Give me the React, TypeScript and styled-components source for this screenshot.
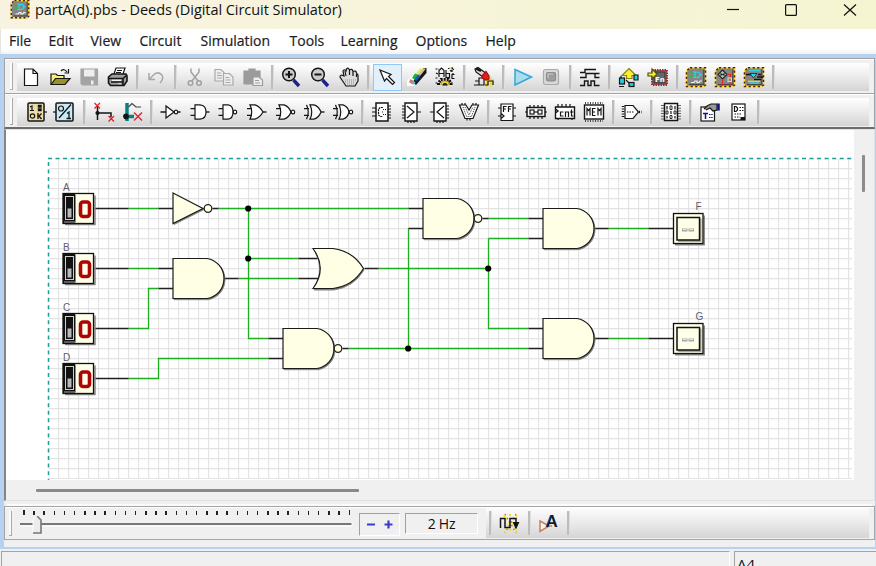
import React from "react";
import styled, { createGlobalStyle } from "styled-components";

const Global = createGlobalStyle`
  * { box-sizing: border-box; }
  body { margin: 0; overflow: hidden; background: #efefef; }
`;

const Window = styled.div`
  width: 876px;
  height: 566px;
  overflow: hidden;
  display: flex;
  flex-direction: column;
  background: #f0f0f0;
  font-family: "Open Sans", "Noto Sans", sans-serif;
  color: #111;
`;

const TitleBar = styled.header`
  height: 29px;
  flex: none;
  display: flex;
  align-items: flex-start;
  background: linear-gradient(100deg, #f8f3e1, #f6f4d8 60%, #f5f5d2);
`;

const AppIcon = styled.svg`
  width: 22px;
  height: 22px;
  margin: -2px 0 0 9px;
`;

const Title = styled.h1`
  margin: 0 0 0 4px;
  width: 680px;
  font-size: 14.5px;
  font-weight: 400;
  line-height: 20px;
  letter-spacing: -0.05px;
  white-space: nowrap;
`;

const WindowButton = styled.svg<{ $gap: number }>`
  width: 14px;
  height: 14px;
  margin: 3px 0 0 ${(p) => p.$gap}px;
  fill: none;
  stroke: #111;
  stroke-width: 1.2;
`;

const MenuBar = styled.nav`
  height: 25px;
  flex: none;
  display: flex;
  padding-left: 8px;
  border-left: 1px solid #e4e4e4;
  background: linear-gradient(#fff 80%, #f2f2f2);
`;

const MenuItem = styled.span<{ $w: number }>`
  width: ${(p) => p.$w}px;
  flex: none;
  font-size: 14px;
  line-height: 24px;
  white-space: nowrap;
  color: #1b1b25;
  -webkit-text-stroke: 0.2px #1b1b25;
`;

const Frame = styled.main`
  height: 495px;
  flex: none;
  display: flex;
  flex-direction: column;
  border: solid #b7d2f0;
  border-width: 4px 1px 2px 4px;
  background: #f0f0f0;
`;

const ToolRow = styled.div<{ $last?: boolean }>`
  height: ${(p) => (p.$last ? 36 : 35)}px;
  flex: none;
  display: flex;
  align-items: flex-start;
  padding: 4px 5px 0 5px;
  border: solid #a2a2a2;
  border-width: 1px 1px ${(p) => (p.$last ? "2px" : "0")} 1px;
  border-bottom-color: #6c6c6c;
  box-shadow: inset 0 1px #fff;
`;

const Grip = styled.i`
  width: 3px;
  height: 27px;
  flex: none;
  border: solid #aaa;
  border-width: 0 1px 1px 0;
  background: #fbfbfb;
`;

const Tools = styled.div<{ $pad: number }>`
  flex: 1;
  height: 28px;
  display: flex;
  align-items: center;
  margin-left: 4px;
  padding-left: ${(p) => p.$pad}px;
  background: linear-gradient(#fff, #ebebeb 50%, #d4d4d4);
`;

const Slot = styled.div<{ $active?: boolean }>`
  width: 28.8px;
  height: 27px;
  flex: none;
  display: flex;
  align-items: center;
  justify-content: center;
  border: 1px solid ${(p) => (p.$active ? "#8fc8f7" : "transparent")};
  background: ${(p) => (p.$active ? "#e2f0fc" : "transparent")};
`;

const Glyph = styled.svg`
  width: 24px;
  height: 24px;
  flex: none;
  overflow: visible;
  fill: none;
  stroke: #151515;
  stroke-width: 1.2;
  font-family: "DejaVu Sans", sans-serif;
  font-weight: 700;
`;

const Divider = styled.div`
  width: 9.9px;
  height: 24px;
  flex: none;
  display: flex;
  justify-content: center;
  &::after {
    content: "";
    width: 2px;
    background: #bcbcbc;
    border-right: 1px solid #dedede;
  }
`;

const Work = styled.section`
  height: 372px;
  flex: none;
  display: flex;
  border: solid #e2e2e2;
  border-width: 1px 1px 1px 2px;
  border-left-color: #858585;
`;

const WorkMain = styled.div`
  width: 848px;
  flex: none;
  display: flex;
  flex-direction: column;
`;

const Sheet = styled.svg`
  width: 848px;
  height: 350px;
  flex: none;
  display: block;
  background: #fff;
`;

const HScroll = styled.div`
  flex: 1;
  padding: 8.5px 0 0 30px;
  &::after {
    content: "";
    display: block;
    width: 323px;
    height: 3px;
    border-radius: 1px;
    background: #8a8a8a;
  }
`;

const VScroll = styled.div`
  flex: 1;
  padding: 25px 0 0 8px;
  &::after {
    content: "";
    display: block;
    width: 3px;
    height: 37px;
    border-radius: 1px;
    background: #8b8b8b;
  }
`;

const SimBar = styled.div`
  height: 34px;
  flex: none;
  display: flex;
  margin-top: 5px;
  padding: 1px 5px 1px 4px;
  border: 1px solid #a5a5a5;
  box-shadow: 0 -5px 0 -3px #fbfbfb, inset 0 1px #fff;
`;

const SimGrip = styled(Grip)`
  height: 25px;
  margin-top: 3px;
`;

const Slider = styled.div`
  width: 335px;
  flex: none;
  margin-left: 8px;
  display: flex;
  flex-direction: column;
`;

const Ticks = styled.div`
  display: flex;
  justify-content: space-between;
  width: 327px;
  height: 6px;
  margin: 2px 0 0 3px;
`;

const Tick = styled.i<{ $end: boolean }>`
  width: 1.5px;
  height: ${(p) => (p.$end ? 5 : 4)}px;
  margin-top: ${(p) => (p.$end ? 0 : 1)}px;
  background: #222;
`;

const Track = styled.svg`
  width: 335px;
  height: 20px;
`;

const Well = styled.div<{ $w: number; $ml: number; $h: number; $mt: number }>`
  width: ${(p) => p.$w}px;
  height: ${(p) => p.$h}px;
  flex: none;
  margin: ${(p) => p.$mt}px 0 0 ${(p) => p.$ml}px;
  display: flex;
  align-items: center;
  justify-content: center;
  border: 1px solid;
  border-color: #a0a0a0 #fff #fff #a0a0a0;
  font-size: 14px;
  letter-spacing: -0.3px;
`;

const SimTools = styled.div`
  flex: 1;
  margin-left: 8px;
  display: flex;
  align-items: center;
  background: linear-gradient(#fdfdfd, #ececec 45%, #d5d5d5);
`;

const Status = styled.footer`
  height: 17px;
  flex: none;
  display: flex;
  padding: 2px 0 0 1px;
  overflow: hidden;
  gap: 4px;
`;

const StatusPane = styled.div<{ $w?: number }>`
  ${(p) => (p.$w ? `width: ${p.$w}px; flex: none;` : "flex: 1;")}
  height: 24px;
  padding: 2px 0 0 2px;
  border: solid #a3a3a3;
  border-width: 1px 0 0 1px;
  border-right: ${(p) => (p.$w ? "1px solid #fff" : "0")};
  font-size: 15px;
  line-height: 20px;
  overflow: hidden;
`;

const Chip = ({ kind }: { kind: number }) => (
  <g stroke="none">
    <path d="M6 2H22V20L20 22H2V6Z" fill="#858585" />
    <path d="M6 2.7H21.5V20L19.5 21.5H2.5V6Z" fill="none" stroke="#f7ea2c" strokeWidth="1.5" />
    <path d="M6 2.7H21.5V20L19.5 21.5H2.5V6Z" fill="none" stroke="#5f1818" strokeWidth="1.5" strokeDasharray="2.200 2.400" />
    <path d="M5 19.6H19.8V4.500" fill="none" stroke="#333" strokeWidth="0.9" />
    {kind === 0 && (
      <g fill="none">
        <path d="M9 7H12.500Q16 7 16 9.700Q16 12.500 12.500 12.500H9M11 7V12.500M16 9.700H18" stroke="#18dfee" strokeWidth="1.2" />
        <path d="M6 8h2.500M6 11.500h2.500" stroke="#22c522" strokeWidth="1.2" />
        <path d="M7 17.500h3l1-1.500h2v1.500h2l1-1.500h2" stroke="#f4f4f4" strokeWidth="1.2" />
      </g>
    )}
    {kind === 1 && (
      <g fill="none">
        <path d="M9.500 5L14 9.500L9.500 14L5 9.500Z" fill="#b8c4b4" stroke="#222" strokeWidth="1.1" />
        <path d="M8 11V8M11 11V8M8 9.500h3" stroke="#111" strokeWidth="0.9" />
        <path d="M14 9.500h3.500v3M9.500 14v7" stroke="#e32626" strokeWidth="1.2" />
        <rect x="15" y="13" width="3.500" height="3.500" stroke="#f4d0d0" strokeWidth="1" />
        <path d="M17 17v4" stroke="#e32626" strokeWidth="1.2" />
      </g>
    )}
    {kind === 2 && (
      <g fill="none">
        <path d="M7 5.500H18M7 18.200H17" stroke="#18dfee" strokeWidth="1.5" />
        <path d="M4 9.500H9M15 12H21M16 9.500h3M12 14.500h7" stroke="#111" strokeWidth="1.4" />
        <path d="M8 8.500h7l-3.500 4.500z" fill="#18dfee" stroke="#222" strokeWidth="0.800" />
        <path d="M6 16.300h12" stroke="#f3df22" strokeWidth="1.200" />
      </g>
    )}
  </g>
);

const Gate = ({ kind, not }: { kind: "and" | "or" | "xor" | "inv"; not?: boolean }) => {
  const end = kind === "inv" ? 15 : not ? 17 : 18;
  return (
    <g transform="translate(0 -1.2) scale(1 1.1)">
      {kind === "inv" && <path d="M1.500 12H7M7 6.500V17.500L15 12ZM19 12H21.500" fill="#fff" />}
      {kind === "and" && <path d={`M2.500 9H7M2.500 15H7M7 5.500H12Q${end} 6 ${end} 12Q${end} 18 12 18.500H7Z`} fill="#fff" />}
      {kind === "or" && <path d={`M2 9H7M2 15H7M5 5.500H10Q15 7 ${end} 12Q15 17 10 18.500H5Q8.500 12 5 5.500Z`} fill="#fff" />}
      {kind === "xor" && (
        <g>
          <path d={`M1 9H6M1 15H6M7 5.500H11Q16 7 ${end} 12Q16 17 11 18.500H7Q10.500 12 7 5.500Z`} fill="#fff" />
          <path d="M3.500 5.500Q7 12 3.500 18.500" />
        </g>
      )}
      {not || kind === "inv" ? <circle cx={end + 2} cy="12" r="1.700" fill="#fff" /> : <path d="M18 12H21.500" />}
    </g>
  );
};

const Lens = ({ plus }: { plus?: boolean }) => (
  <g>
    <path d="M14.500 15L20 21" stroke="#20208a" strokeWidth="3.400" />
    <circle cx="10" cy="9.500" r="6.300" fill="#c9cdd0" strokeWidth="1.500" />
    <path d={plus ? "M6.500 9.500h7M10 6v7" : "M6.500 9.500h7"} strokeWidth="2" />
  </g>
);

const icons: Record<string, React.ReactNode> = {
  new: <path d="M5.500 4H14L18.500 8.500V20.500H5.500ZM14 4V8.500H18.500" fill="#fff" />,
  open: (
    <g>
      <path d="M3 19V9H8L9.500 10.500H16V14" fill="#f5ee78" />
      <path d="M3 19.500L7.500 13.500H22L17 19.500Z" fill="#98922c" />
      <path d="M13 6Q16 3 19 7M20.500 4V8H16.500" />
    </g>
  ),
  save: (
    <g stroke="#a4a4a4">
      <path d="M4 4H20.500V20H5.500L4 18.500Z" fill="#a4a4a4" />
      <path d="M7 4.500H17.500V11.500H7ZM14 15.500h2.500v4H14z" fill="#eee" stroke="none" />
    </g>
  ),
  print: (
    <g>
      <path d="M8 9L10 3H19L17 9M11 5.500h5M10 7.500h5" fill="#fff" />
      <path d="M2.500 12L6 9H20L21 11V16L18 20.500H4.500L2.500 18Z" fill="#a0a0a0" strokeWidth="1.600" />
      <path d="M3 13.500H17L20.500 10.500M5 17H17M17 14V20" strokeWidth="1.600" />
      <path d="M6 15.300H15" stroke="#fff" /><path d="M12 18.500h3" stroke="#eadf52" />
    </g>
  ),
  undo: <path d="M5 8V14.500H11M5.500 14L10 9.500Q14 6 18 10Q20 14 16 18" stroke="#a9a9a9" strokeWidth="1.500" />,
  cut: (
    <g stroke="#a1a1a1" strokeWidth="1.500">
      <path d="M8 3.500V7L15 16M16 3.500V7L9 16" />
      <circle cx="7.500" cy="18" r="2.300" /><circle cx="16" cy="18" r="2.300" />
    </g>
  ),
  copy: (
    <g stroke="#a8a8a8" fill="#eee">
      <path d="M3 4.500H9L12 7.500V16H3ZM5 8h4M5 10.500h5M5 13h5" />
      <path d="M11.500 8.500H17.500L21 12V20H11.500ZM13.500 12.500h4M13.500 15h5M13.500 17.500h5" />
    </g>
  ),
  paste: (
    <g stroke="#9b9b9b">
      <path d="M3 6H8V4H14V6H19V19H3Z" fill="#9b9b9b" />
      <path d="M12 12H18L21.500 15V20.500H12ZM14 15.500h4M14 18h5" fill="#eee" />
    </g>
  ),
  zoomIn: <Lens plus />,
  zoomOut: <Lens />,
  hand: (
    <g>
      <path d="M7 18L3 12Q3 9 7 11L6 6Q7 3.500 9 6L9.500 4Q11.500 2 12.500 5Q15 3 16 6.500Q19 5 19.500 8L21 10V16L18 21H9Z" fill="#ddd" />
      <path d="M8 6L9 11M12.500 5V10M16 7V11M19.500 9V12" />
      <path d="M8 15H19M8 17H18M10 19H18" stroke="#8d8d8d" strokeDasharray="1 1" />
    </g>
  ),
  arrow: <path d="M4 5L15 9.500L12.500 11.500L18.500 17.500L16.500 19.500L10.500 13.500L8.500 16Z" fill="#fff" />,
  eraser: (
    <g stroke="none">
      <path d="M2 16L7 11L13 16L9 21H2Z" fill="#fff" />
      <path d="M18.500 3H21.500V8L11 20L7.500 17Z" fill="#191919" />
      <path d="M15 3.500H20.500L14 12L10 9.500Z" fill="#efe66b" />
      <path d="M17.500 4H20.500L14 12L12.500 10Z" fill="#c9c4a0" />
      <path d="M10 8.500L14.500 10.500L11 15.500L7 13Z" fill="#10b634" />
      <path d="M13 9.500l2.500 1.500-4 5-2-1.500z" fill="#2353c4" />
      <path d="M5.500 14L9.500 16.500L7.500 19.500L4 17Z" fill="#c77" />
      <path d="M8.500 16L10.500 17.500L9 20L7 18.500Z" fill="#4ac6dc" />
    </g>
  ),
  props: (
    <g>
      <path d="M2.500 4L6 4M3 8L5 9M2.500 13h3M15 3.500h6M17 6l4-2M19 2v5M20 8v3M2.500 18h3" strokeDasharray="2 1" />
      <path d="M6 12V5.500L8.500 3L11 5.500V12M6 8.500H11M13 5V12.500H16.500V8.500H13M21.500 9.500H19V13.500H21.500" />
      <path d="M5.500 20V18L8 14.500H15.500L18 18V20" stroke="#111" strokeWidth="3" strokeDasharray="2 1" />
      <path d="M8 20Q8 16 12 16Q16 16 16 20" fill="#f2e13a" stroke="#b79a17" />
      <path d="M10 20.500a2 2 0 0 1 4 0" fill="#222" /><path d="M16 3h3" stroke="#f2e13a" />
    </g>
  ),
  probe: (
    <g>
      <path d="M2 20H7M3 16H7V13H12V20H7V16" />
      <path d="M15 12V22M19 12V22M13 15H22M13 19H22" stroke="#ecdf24" strokeWidth="1.500" />
      <path d="M13 20H16V16H21V20" />
      <path d="M3 4L6 2.500L15 9L11 12L4 7Z" fill="#e4d8d4" />
      <path d="M10 11L14 6.500L17 11V14L14 15L10 13Z" fill="#e31c1c" stroke="#a11" />
      <path d="M4 3.500L9 6" strokeWidth="2.500" />
    </g>
  ),
  play: <path d="M4 4.500L20.500 12L4 20Z" fill="#a9dcef" stroke="#36a6d2" strokeWidth="1.500" />,
  stop: (
    <g>
      <rect x="4.500" y="4.500" width="15" height="15" rx="2" fill="#d9d9d9" stroke="#aaa" />
      <rect x="7.500" y="7.500" width="9" height="8.500" rx="1.500" fill="#9d9d9d" stroke="#8c8c8c" />
      <path d="M9 13V9h5" stroke="#c9c9c9" />
    </g>
  ),
  wave: <path d="M2 7.500H7V4.500H18M2 12.500H8V8.500H17V12.500H21.500M2 20.500H6.500V16H10V20.500H13V16H16.500V20.500H21.500M17 8.500H21.500" strokeWidth="1.400" />,
  hierarchy: (
    <g>
      <path d="M12 3.500L19 10.500H15V13.500H9.500V10.500H5Z" fill="#f7f32a" stroke="#8d8020" />
      <g fill="#25cede"><rect x="2.500" y="13" width="5" height="6" /><rect x="12" y="17.500" width="5" height="4" /><path d="M17 10h4v5h-4z" /></g>
      <path d="M2 21.500h5M4 11v2M9 15l3 3" />
    </g>
  ),
  fn: (
    <g>
      <rect x="6" y="5" width="15" height="15" fill="#777" stroke="#a4282f" strokeWidth="2" strokeDasharray="1.500 1" />
      <rect x="8" y="7" width="11" height="11" fill="#666" stroke="#333" strokeWidth="1" />
      <path d="M2 8H6V4L11 9L6 14V11H2Z" fill="#f3ef2a" stroke="#554e10" />
      <text x="9" y="17" fontSize="7" fill="#fff" stroke="none">Fn</text>
    </g>
  ),
  chip0: <Chip kind={0} />,
  chip1: <Chip kind={1} />,
  chip2: <Chip kind={2} />,
  digits: (
    <g>
      <path d="M20 12h3" />
      <rect x="4" y="3" width="16" height="18" rx="1" fill="#ecdca5" strokeWidth="1.500" />
      <path d="M6 7L8 6V10.500M6 10.500H10" /><circle cx="8.500" cy="16" r="2.200" />
      <path d="M14.500 5.500h2.500v1.500h-2.500zM14.500 9h2.500v1.500h-2.500zM14 13v6M14 16h1l2.500-2.500M15 16l2.500 3" strokeWidth="1.400" />
    </g>
  ),
  toggle: (
    <g>
      <path d="M0 12h3" />
      <rect x="3" y="3" width="17" height="18" rx="1" fill="#c7eaf6" strokeWidth="1.500" />
      <circle cx="8" cy="8.500" r="2.500" /><path d="M18 4.500L6 18M14 13.500L16 12V18.500M13.500 18.500H18" strokeWidth="1.300" />
    </g>
  ),
  wire: (
    <g>
      <path d="M6.500 6V20M6.500 13H20V17" strokeWidth="1.500" /><circle cx="6.500" cy="13" r="1.500" fill="#111" />
      <path d="M3.500 3L9 8.500M9 3L3.500 8.500M17.500 16L23 21.500M23 16L17.500 21.500" stroke="#e31d25" />
    </g>
  ),
  bus: (
    <g>
      <path d="M7 3V21" stroke="#098080" strokeWidth="3.500" /><path d="M4 16.500H14" stroke="#098080" strokeWidth="3.500" />
      <path d="M8.500 7L12 3.500L16 7H21" stroke="#444" /><circle cx="6" cy="16.500" r="2.300" fill="#111" />
      <path d="M14 12.500L22 20.500M22 12.500L14 20.500" stroke="#e31d25" strokeWidth="1.300" />
    </g>
  ),
  inv: <Gate kind="inv" />,
  and: <Gate kind="and" />,
  nand: <Gate kind="and" not />,
  or: <Gate kind="or" />,
  nor: <Gate kind="or" not />,
  xor: <Gate kind="xor" />,
  xnor: <Gate kind="xor" not />,
  encoder: (
    <g>
      <path d="M2 8H6M2 12H6M2 16H6M18 6h3M18 9h3M18 12h3M18 15h3M18 18h3" />
      <rect x="6" y="3" width="12" height="18" fill="#fff" strokeWidth="1.500" />
      <path d="M13 7.500H10L8.500 9V15L10 16.500H13" strokeDasharray="2 0.700" />
      <path d="M13 9.500h3M12 12h2M13 14.500h3" strokeDasharray="1 1" />
    </g>
  ),
  mux: (
    <g>
      <path d="M3 6H6M3 9H6M3 12H6M3 15H6M3 18H6M18 12h4M9 21v2M12 21v2M15 21v2" />
      <path d="M6 3H18V21H6Z" fill="#fff" strokeWidth="1.400" /><path d="M8 6L15 12L8 18" />
    </g>
  ),
  demux: (
    <g>
      <path d="M2 12H6M18 6h3M18 9h3M18 12h3M18 15h3M18 18h3M9 21v2M12 21v2M15 21v2" />
      <path d="M6 3H18V21H6Z" fill="#fff" strokeWidth="1.400" /><path d="M16 6L9 12L16 18" />
    </g>
  ),
  alu: (
    <g>
      <path d="M5 5V3M8 5V3M16 5V3M19 5V3M10 18V20.500M13 18V20.500" />
      <path d="M2.500 5H9L12 10L15 5H21.500L16 18.500H8Z" fill="#fff" />
      <path d="M6 7L9.500 16.500H14.500L18 7M8 7L12 15L16 7" strokeDasharray="1 1" strokeWidth="0.900" />
    </g>
  ),
  ff: (
    <g>
      <path d="M3 8h3M3 16h3M18 8h3M18 16h3" />
      <path d="M6 4H18V20.500H6ZM6 13.500L9 16L6 18.500" fill="#fff" />
      <path d="M8.500 12V6.500H11.500M8.500 9H11M13.500 12V6.500H16.500M13.500 9H16" />
    </g>
  ),
  register: (
    <g>
      <path d="M6 5V8M10 5V8M14 5V8M18 5V8M6 16v3M10 16v3M14 16v3M18 16v3M1 12h2M21 12h2" />
      <rect x="3" y="7.500" width="18" height="9" fill="#fff" strokeWidth="1.500" />
      <rect x="6" y="10" width="4" height="4" /><rect x="14" y="10" width="4" height="4" />
      <path d="M10 12h4" />
    </g>
  ),
  counter: (
    <g>
      <path d="M5 4V7M9 4V7M13 4V7M17 4V7M5 18v2M19 18v2" />
      <path d="M2.500 7H21.500V18.500H2.500ZM2.500 9L5 11L2.500 13" fill="#fff" strokeWidth="1.400" />
      <path d="M10.500 12H7.500V16H10.500M12.500 17V12H15.500V17M18.500 9.500V16H20.500M17 12h3.500" />
    </g>
  ),
  mem: (
    <g>
      <path d="M3 3H21M3 21H21" strokeWidth="1.600" strokeDasharray="1 1.500" />
      <rect x="2.500" y="5" width="19" height="14" fill="#fff" strokeWidth="1.400" />
      <path d="M5 15.500V8.500L6.500 10.500L8 8.500V15.500M13.500 8.500H10.500V15.500H13.500M10.500 12H13M16 15.500V8.500L17.500 10.500L19 8.500V15.500" />
    </g>
  ),
  block: (
    <g>
      <path d="M3 6V18M19 12H22" strokeDasharray="1 1.500" strokeWidth="2.500" />
      <path d="M5 5.500H13L18.500 12L13 18.500H5Z" fill="#fff" /><path d="M7 12h7" strokeDasharray="1.500 1" />
    </g>
  ),
  dip: (
    <g>
      <path d="M3.500 5V20M20.500 5V20" strokeWidth="3" strokeDasharray="1 1.700" stroke="#666" />
      <rect x="5.500" y="3.500" width="13" height="17" fill="#fff" strokeWidth="1.500" />
      <path d="M8 6V9.500M16 6V9.500M12 11V14M8 16V18.500M16 16V18.500" strokeWidth="1.200" />
      <path d="M11 6h2v3.500h-2zM7 11h2v3H7zM15 11h2v3h-2zM11 15.500h2v3h-2z" strokeWidth="0.900" />
    </g>
  ),
  label: (
    <g>
      <rect x="3" y="7" width="13.500" height="14" fill="#fff" />
      <path d="M6 9L9 6L13 4H19V10L15 11L12 8L8 10" fill="#999" /><path d="M20.500 3.500V10.500" stroke="#11118c" strokeWidth="2.500" />
      <path d="M5 13.500H10M7.500 13.500V19" stroke="#11118c" strokeWidth="1.500" />
      <path d="M11 14.500H15M11 17.500H15" stroke="#11118c" strokeDasharray="1.500 0.700" />
    </g>
  ),
  doc: (
    <g>
      <rect x="5" y="4" width="13" height="16" fill="#fff" />
      <path d="M7.500 6.500V11.500H9L10.500 10V8L9 6.500Z" />
      <path d="M12.500 7.500H16.500M12.500 10.500H16.500M7.500 14H15M7.500 17H13" strokeDasharray="1.500 1" /><path d="M13.500 18.500h4.500" strokeWidth="3" />
    </g>
  ),
  timing: (
    <g>
      <path d="M6 4L19 21M19 4L6 21M12 3V6M12 18V21" stroke="#f6df1b" strokeWidth="2" strokeDasharray="2 2" />
      <path d="M7 3L18 22M18 3L7 22" stroke="#f24343" strokeDasharray="1.300 3" />
      <path d="M2.500 17V7.500H7V16.500H12V7.500H18V14" strokeWidth="1.500" />
      <path d="M15.500 11.500H20.500L18 17Z" fill="#111" />
    </g>
  ),
  note: (
    <g>
      <path d="M3 10L12 15L3 20.500ZM12 15H15" stroke="#c77f60" strokeWidth="1.500" fill="#fff5ec" />
      <text x="8.500" y="16" fontSize="17" fill="#10182d" stroke="none" fontFamily="Liberation Sans">A</text>
      <path d="M9 16L14 4" stroke="#225591" strokeWidth="0.700" />
    </g>
  ),
};

const fileTools = "new open save print | undo | cut copy paste | zoomIn zoomOut hand | arrow eraser props | probe | play stop | wave | hierarchy fn | chip0 chip1 chip2 |".split(" ");
const partTools = "digits toggle | wire bus | inv and nand or nor xor xnor | encoder mux demux alu | ff register counter mem | block | dip | label doc |".split(" ");

const ToolList = ({ names }: { names: string[] }) => (
  <>
    {names.map((n, i) =>
      n === "|" ? (
        <Divider key={i} />
      ) : (
        <Slot key={i} $active={n === "arrow"}>
          <Glyph viewBox="0 0 24 24">{icons[n]}</Glyph>
        </Slot>
      )
    )}
  </>
);

const GREEN = "#1fb01f";

const Switch = ({ y, name }: { y: number; name: string }) => (
  <g>
    <text x="63" y={y - 18} fontSize="10" fill="#5c5c70">{name}</text>
    <path d={`M65 ${y + 16}H95V${y - 13}`} stroke="#888" strokeWidth="1.500" fill="none" />
    <rect x="63" y={y - 15} width="30.500" height="30" fill="#ffffe9" stroke="#111" strokeWidth="1.300" />
    <rect x="63" y={y - 15} width="12" height="30" fill="#111" />
    <path d={`M64 ${y + 13.500}H75`} stroke="#aaa" />
    <rect x="65.500" y={y - 12} width="8" height="23" fill="#111" stroke="#cbd3c7" strokeWidth="1" />
    <rect x="67.500" y={y} width="4" height="9" fill="#bbb" />
    <path d={`M75.500 ${y - 14}V${y + 14}`} stroke="#888" />
    <rect x="80.500" y={y - 6.500} width="9" height="14.500" rx="2.500" fill="none" stroke="#ad0505" strokeWidth="3.600" />
  </g>
);

const AndGate = ({ x, y, not }: { x: number; y: number; not?: boolean }) => {
  const d = `M${x} ${y - 20}h34c9 1.500 17 9 17 20s-8 18.500-17 20h-34z`;
  return (
    <g>
      <path d={d} transform="translate(1 1.200)" fill="#777" stroke="#888" />
      <path d={d} fill="#ffffe5" stroke="#1b1b1b" strokeWidth="1.200" />
      {not && <circle cx={x + 55} cy={y} r="3.800" fill="#ffffe5" stroke="#222" strokeWidth="1.300" />}
    </g>
  );
};

const Lamp = ({ y, name }: { y: number; name: string }) => (
  <g>
    <text x="695.500" y={y - 18.500} fontSize="10" fill="#5c5c70">{name}</text>
    <path d={`M675 ${y + 16.200}H704.200V${y - 13}`} stroke="#888" strokeWidth="1.500" fill="none" />
    <rect x="673.500" y={y - 15} width="29.500" height="30" fill="#ffffe9" stroke="#111" strokeWidth="1.300" />
    <path d={`M678 ${y + 12.500}H700.500V${y - 10}`} stroke="#a9a99c" strokeWidth="2" fill="none" />
    <rect x="677" y={y - 11} width="22.500" height="22.500" fill="#ffffe9" stroke="#111" strokeWidth="1.500" />
    <path d={`M682 ${y + 1.500}h5.500m1 0h5.500`} stroke="#a8a8a8" strokeWidth="3" />
    <path d={`M683 ${y + 1}h3.500m3 0h3.500`} stroke="#e8e8e8" />
  </g>
);

const Circuit = () => (
  <Sheet viewBox="6 130 848 350" fontFamily="Liberation Sans, Arial, sans-serif">
    <defs>
      <pattern id="grid" x="48" y="158" width="10" height="10" patternUnits="userSpaceOnUse">
        <path d="M0 0.500H10M0.500 0V10" stroke="#e4e4e4" strokeWidth="1.300" />
      </pattern>
    </defs>
    <rect x="49" y="159" width="803" height="320" fill="url(#grid)" />
    <path d="M48 158.500H853M48.500 162V480" fill="none" stroke="#239b98" strokeWidth="1.500" strokeDasharray="4 3.540" />
    <g fill="none" strokeWidth="1.300" transform="translate(0.5 0.5)">
      <path
        stroke={GREEN}
        d="M128 208H158M218 208H408M248 208V338H268M248 258H298M128 268H158M128 328H148V288H158M238 278H298M378 268H488M128 378H158V358H268M348 348H528M408 348V228M488 218H528M488 238V328H528M488 238H528M608 228H648M608 338H648"
      />
      <path
        stroke="#222"
        d="M94 208H128M158 208H173M212 208H218M408 208H423M94 268H128M158 268H173M158 288H173M94 328H128M94 378H128M224 278H238M298 258H319M298 278H319M364 268H378M268 338H283M268 358H283M342 348H348M408 228H423M482 218H488M528 218H543M528 238H543M528 328H543M528 348H543M594 228H608M648 228H673M594 338H608M648 338H673"
      />
      {[[248, 208], [248, 258], [408, 348], [488, 268]].map(([x, y]) => (
        <circle key={`${x}-${y}`} cx={x - 0.3} cy={y} r="3.100" fill="#000" />
      ))}
    </g>
    <path d="M174 194.500L204 209.500L174 224.500Z" fill="#777" stroke="#888" />
    <path d="M173 193L203 208.500L173 223.500Z" fill="#ffffe5" stroke="#1b1b1b" strokeWidth="1.200" />
    <circle cx="208" cy="208.500" r="3.800" fill="#ffffe5" stroke="#222" strokeWidth="1.300" />
    <AndGate x={173} y={278.500} />
    <AndGate x={283} y={348.500} not />
    <AndGate x={423} y={218.500} not />
    <AndGate x={543} y={228.500} />
    <AndGate x={543} y={338.500} />
    <path d="M314 249.500H334Q354 252 364 270Q354 287 334 290H314Q326 270 314 249.500Z" fill="#777" stroke="#888" />
    <path d="M313 248.500H333Q353 251 363.500 268.500Q353 286 333 288.500H313Q327.500 268.500 313 248.500Z" fill="#ffffe5" stroke="#1b1b1b" strokeWidth="1.200" />
    <Switch name="A" y={208.500} />
    <Switch name="B" y={268.500} />
    <Switch name="C" y={328.500} />
    <Switch name="D" y={378.500} />
    <Lamp name="F" y={228.500} />
    <Lamp name="G" y={338.500} />
  </Sheet>
);

const menus: [string, number][] = [
  ["File", 39.5], ["Edit", 42], ["View", 49], ["Circuit", 61], ["Simulation", 89],
  ["Tools", 51], ["Learning", 75], ["Options", 70], ["Help", 40],
];

export default function App() {
  return (
    <Window>
      <Global />
      <TitleBar>
        <AppIcon viewBox="0 0 24 24"><Chip kind={0} /></AppIcon>
        <Title>partA(d).pbs - Deeds (Digital Circuit Simulator)</Title>
        <WindowButton $gap={11} viewBox="0 0 14 14"><path d="M1 6.500H13" /></WindowButton>
        <WindowButton $gap={44} viewBox="0 0 14 14"><rect x="1.600" y="1.600" width="10.800" height="10.800" rx="1" /></WindowButton>
        <WindowButton $gap={45} viewBox="0 0 14 14"><path d="M1 1.500L13 12.500M13 1.500L1 12.500" /></WindowButton>
      </TitleBar>
      <MenuBar>
        {menus.map(([name, w]) => <MenuItem key={name} $w={w}>{name}</MenuItem>)}
      </MenuBar>
      <Frame>
        <ToolRow>
          <Grip />
          <Tools $pad={0}><ToolList names={fileTools} /></Tools>
        </ToolRow>
        <ToolRow $last>
          <Grip />
          <Tools $pad={4.5}><ToolList names={partTools} /></Tools>
        </ToolRow>
        <Work>
          <WorkMain>
            <Circuit />
            <HScroll />
          </WorkMain>
          <VScroll />
        </Work>
        <SimBar>
          <SimGrip />
          <Slider>
            <Ticks>
              {Array.from({ length: 33 }, (_, i) => <Tick key={i} $end={i === 0 || i === 32} />)}
            </Ticks>
            <Track viewBox="0 0 335 20">
              <path d="M0 8H332" stroke="#777" strokeWidth="2" />
              <path d="M0 10H332V7" stroke="#fff" fill="none" />
              <path d="M13 17V4L17 0L21 4V17Z" fill="#ececec" />
              <path d="M13 17V4L17 0" stroke="#fff" fill="none" />
              <path d="M17 0L21 4V17H13" stroke="#777" strokeWidth="1.600" fill="none" />
            </Track>
          </Slider>
          <Well $w={41} $h={23} $ml={4} $mt={5}>
            <svg width="28" height="9" viewBox="0 0 28 9">
              <path d="M1 4.500H9M18.500 4.500H26.500M22.500 0.500V8.500" stroke="#3d3dcc" strokeWidth="2.200" />
            </svg>
          </Well>
          <Well $w={73} $h={21} $ml={5} $mt={5}>2 Hz</Well>
          <SimTools>
            <Divider />
            <Slot><Glyph viewBox="0 0 24 24">{icons.timing}</Glyph></Slot>
            <Divider />
            <Slot><Glyph viewBox="0 0 24 24">{icons.note}</Glyph></Slot>
            <Divider />
          </SimTools>
        </SimBar>
      </Frame>
      <Status>
        <StatusPane $w={729} />
        <StatusPane>A4</StatusPane>
      </Status>
    </Window>
  );
}
